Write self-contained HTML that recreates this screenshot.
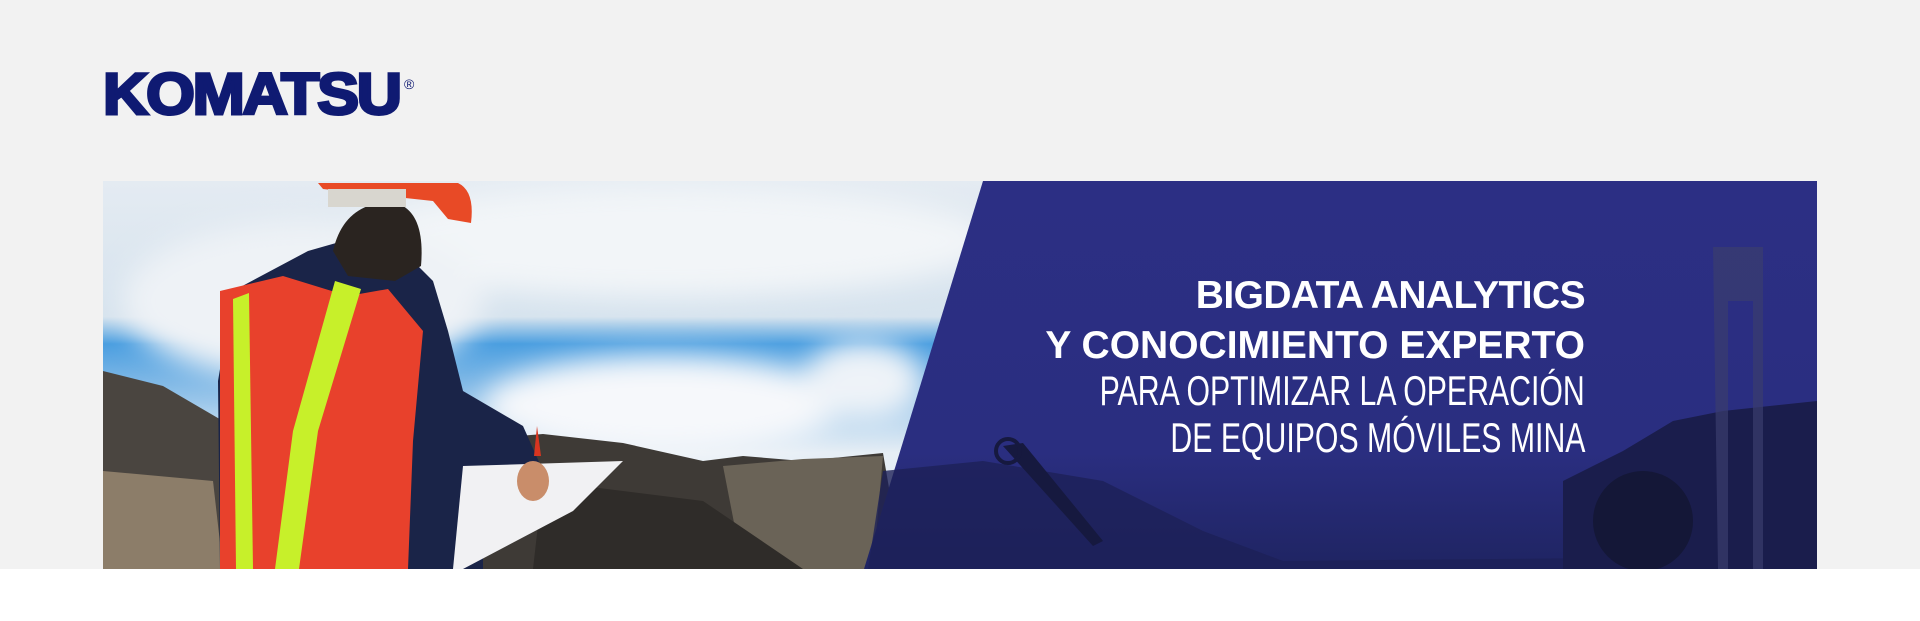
<!DOCTYPE html>
<html><head><meta charset="utf-8"><style>
html,body{margin:0;padding:0}
body{width:1920px;height:621px;background:#fff;position:relative;overflow:hidden;font-family:"Liberation Sans",sans-serif}
#top{position:absolute;left:0;top:0;width:1920px;height:569px;background:#f2f2f2}
#logo{position:absolute;left:103px;top:66px;font-weight:bold;font-size:58px;line-height:1;color:#0f1a72;letter-spacing:-2px;-webkit-text-stroke:3px #0f1a72;transform:scaleX(1.08);transform-origin:left top}
#reg{position:absolute;left:404px;top:76px;font-size:14px;color:#0f1a72}
#banner{position:absolute;left:103px;top:181px;width:1714px;height:388px;overflow:hidden}
.ln{position:absolute;right:232px;white-space:nowrap;color:#fff;line-height:1}
.ln span{display:inline-block;transform-origin:right center}
.b{font-weight:bold;font-size:39px}
.r{font-size:42px}
.r span{transform:scaleX(0.72)}
</style></head><body>
<div id="top"></div>
<div id="logo">KOMATSU</div>
<div id="reg">®</div>
<div id="banner">
<svg width="1714" height="388" viewBox="0 0 1714 388" xmlns="http://www.w3.org/2000/svg">
<defs>
<linearGradient id="sky" x1="0" y1="0" x2="0" y2="1">
<stop offset="0" stop-color="#e4ebf2"/><stop offset="0.35" stop-color="#d6e3ee"/><stop offset="0.42" stop-color="#4a9ee0"/><stop offset="0.52" stop-color="#7fb8e6"/><stop offset="0.7" stop-color="#e6eef5"/>
</linearGradient>
<linearGradient id="blu" x1="0" y1="0" x2="0" y2="1">
<stop offset="0" stop-color="#2c2f84"/><stop offset="0.7" stop-color="#2a2e80"/><stop offset="1" stop-color="#1f2462"/>
</linearGradient>
<filter id="bl"><feGaussianBlur stdDeviation="14"/></filter>
</defs>
<rect width="1714" height="388" fill="url(#sky)"/>
<g filter="url(#bl)">
<ellipse cx="560" cy="60" rx="330" ry="55" fill="#f2f5f8"/>
<ellipse cx="200" cy="120" rx="180" ry="80" fill="#eef2f6"/>
<ellipse cx="560" cy="225" rx="180" ry="50" fill="#f6f8fb"/>
<ellipse cx="760" cy="200" rx="60" ry="40" fill="#eef3f8"/>
</g>
<path d="M0 190 L60 205 L120 240 L130 388 L0 388Z" fill="#4a4540"/>
<path d="M0 290 L110 300 L120 388 L0 388Z" fill="#8c7d69"/>
<path d="M380 258 L440 253 L520 262 L600 280 L640 275 L700 280 L780 272 L800 388 L380 388Z" fill="#3e3a36"/>
<path d="M620 285 L700 278 L780 275 L770 388 L640 388Z" fill="#6a6357"/>
<path d="M440 300 L600 320 L700 388 L430 388Z" fill="#2f2c29"/>
<polygon points="880,0 1714,0 1714,388 761,388" fill="url(#blu)"/>
<path d="M780 290 L880 280 L1000 300 L1100 350 L1180 380 L1714 375 L1714 388 L765 388Z" fill="#1d2158" opacity="0.8"/>
<path d="M1460 300 L1520 270 L1570 240 L1620 230 L1714 220 L1714 388 L1460 388Z" fill="#1a1d4c"/>
<circle cx="1540" cy="340" r="50" fill="#141737"/>
<path d="M1610 66 L1660 66 L1660 388 L1650 388 L1650 120 L1625 120 L1625 388 L1615 388Z" fill="#3a3d6e" opacity="0.7"/>
<path d="M900 265 L920 262 L1000 360 L990 365Z" fill="#16193f"/>
<circle cx="905" cy="270" r="12" fill="none" stroke="#16193f" stroke-width="4"/>
<!-- worker -->
<path d="M205 70 L240 60 L300 70 L330 100 L345 150 L360 210 L420 245 L440 290 L420 330 L380 330 L380 388 L117 388 L115 200 L130 110 Z" fill="#1a2448"/>
<path d="M117 110 L180 95 L245 115 L285 108 L320 150 L310 260 L305 388 L117 388 Z" fill="#e8412c"/>
<path d="M130 118 L146 112 L150 388 L133 388Z" fill="#c7f02a"/>
<path d="M232 100 L258 108 L215 250 L196 388 L172 388 L190 250 Z" fill="#c7f02a"/>
<path d="M230 70 Q238 35 265 25 L300 25 Q322 38 318 85 L292 100 L245 95Z" fill="#2a2420"/>
<path d="M215 2 L355 2 Q372 10 368 42 L345 38 L330 20 L220 8Z" fill="#e84a26"/>
<rect x="225" y="8" width="78" height="18" fill="#d8d6cf"/>
<path d="M360 285 L520 280 L470 330 L360 388 L350 388Z" fill="#f1f1f3"/>
<path d="M431 275 L434 245 L438 275Z" fill="#d83520"/>
<ellipse cx="430" cy="300" rx="16" ry="20" fill="#c98d6a"/>
</svg>
<div class="ln b" style="top:95px"><span style="letter-spacing:-0.6px">BIGDATA ANALYTICS</span></div>
<div class="ln b" style="top:145px"><span>Y CONOCIMIENTO EXPERTO</span></div>
<div class="ln r" style="top:189px"><span>PARA OPTIMIZAR LA OPERACIÓN</span></div>
<div class="ln r" style="top:236px"><span>DE EQUIPOS MÓVILES MINA</span></div>
</div>
</body></html>
